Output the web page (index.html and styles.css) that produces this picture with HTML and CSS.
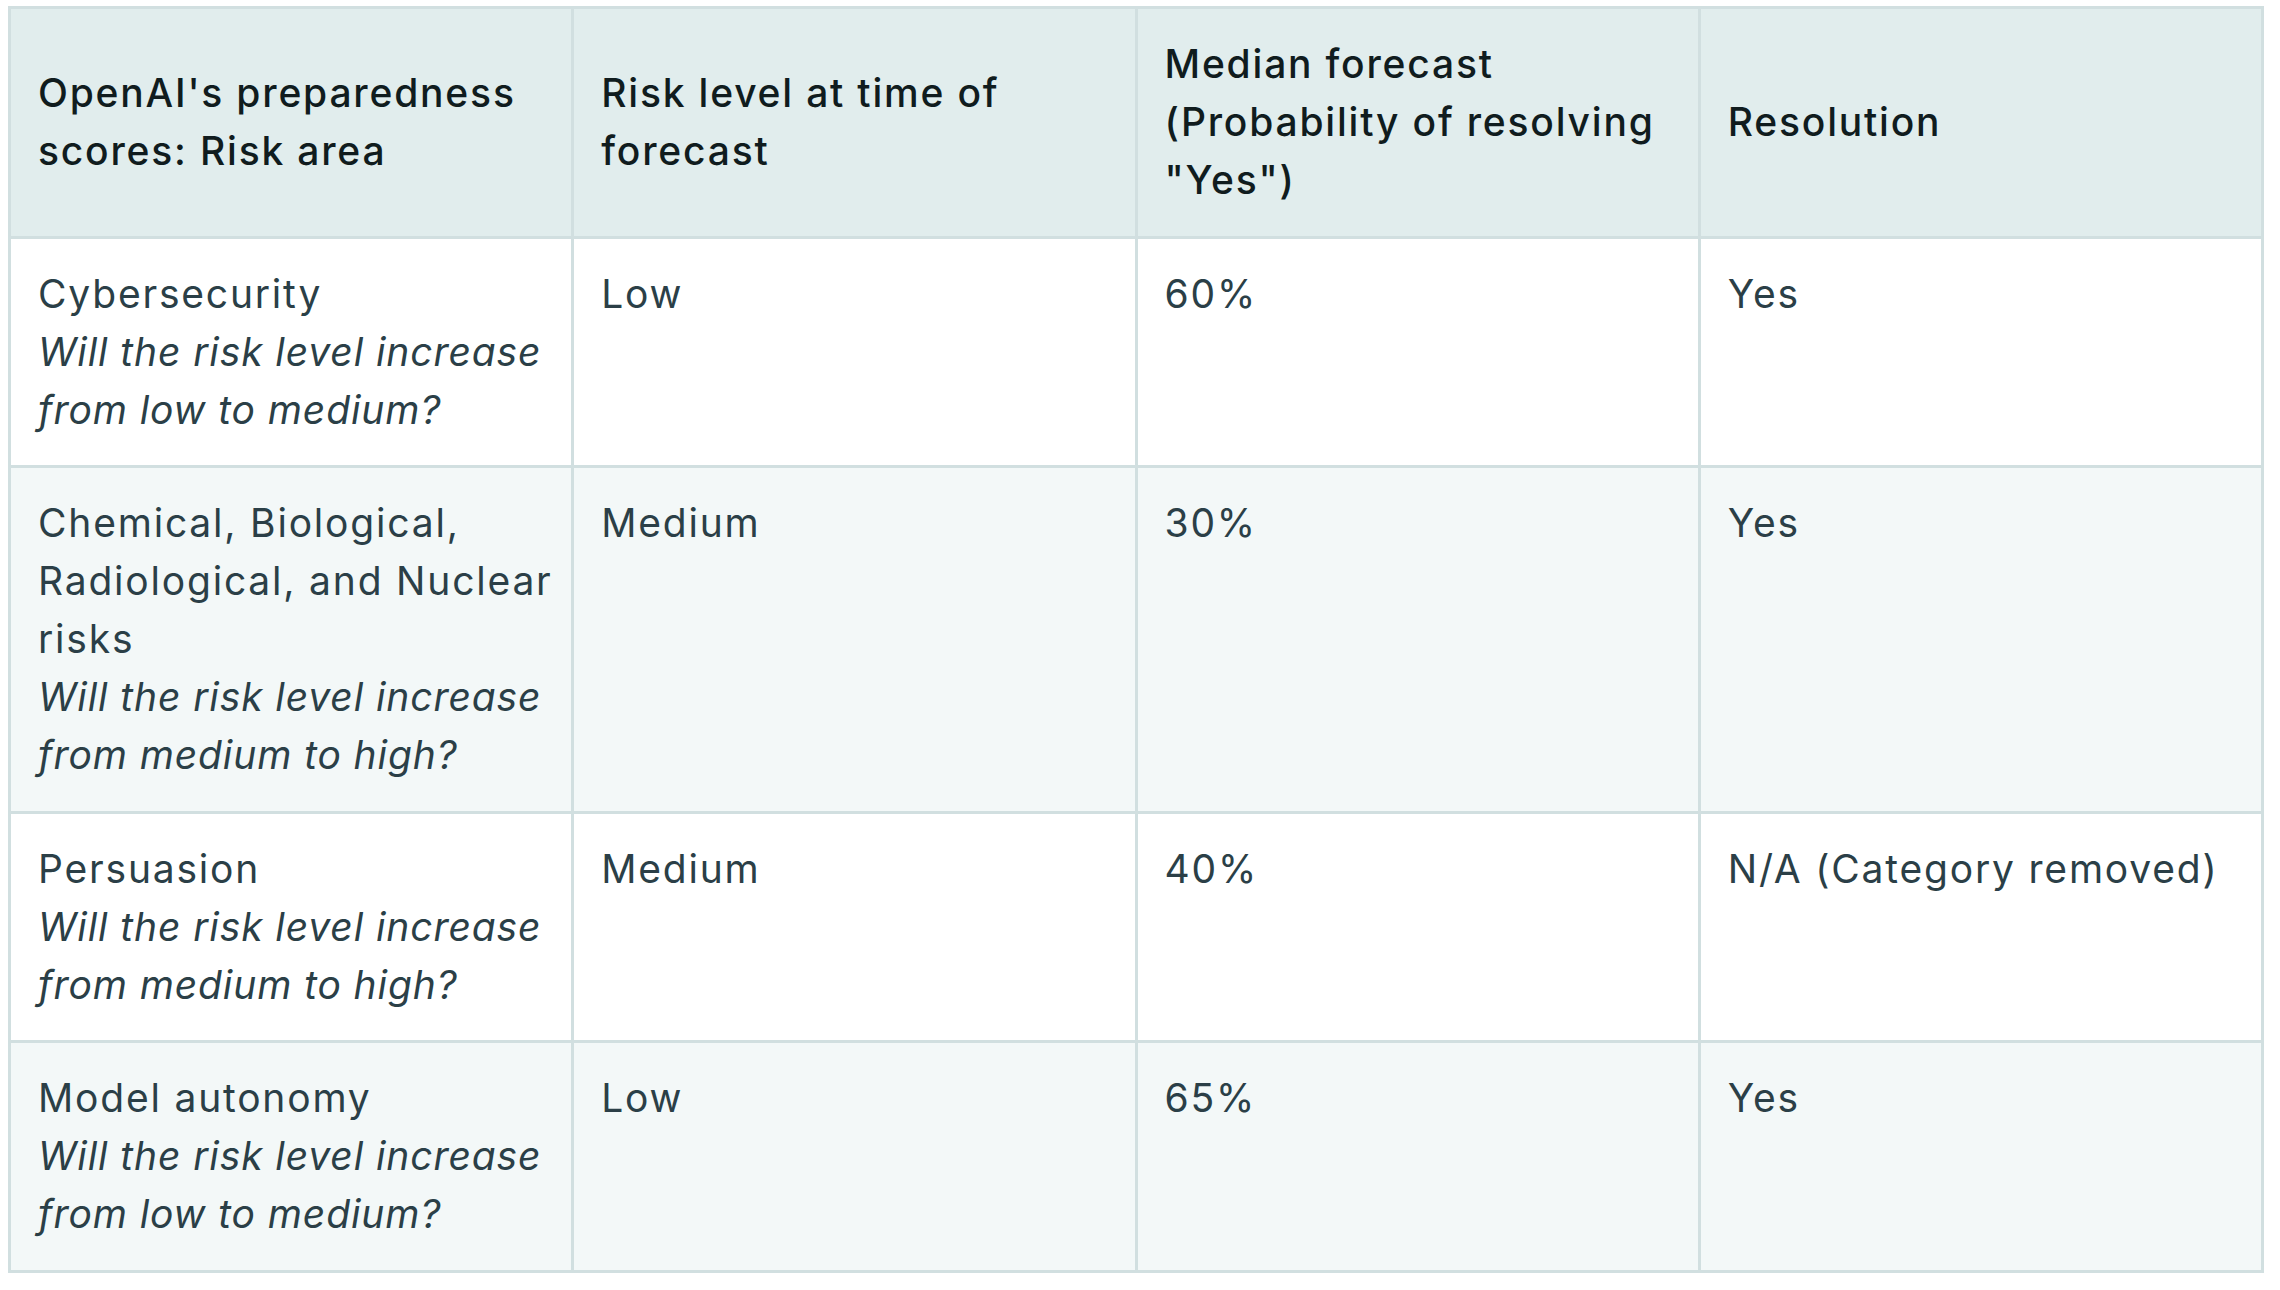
FILE: index.html
```html
<!DOCTYPE html>
<html lang="en">
<head>
<meta charset="utf-8">
<title>Preparedness forecasts</title>
<link rel="stylesheet" href="styles.css">
</head>
<body>
<table class="forecast-table">
  <colgroup>
    <col class="col"><col class="col"><col class="col"><col class="col">
  </colgroup>
  <thead>
    <tr>
      <th>OpenAI's preparedness scores: Risk area</th>
      <th>Risk level at time of forecast</th>
      <th>Median forecast (Probability of resolving "Yes")</th>
      <th>Resolution</th>
    </tr>
  </thead>
  <tbody>
    <tr>
      <td>Cybersecurity<br><em>Will the risk level increase from low to medium?</em></td>
      <td>Low</td>
      <td>60%</td>
      <td>Yes</td>
    </tr>
    <tr class="alt">
      <td>Chemical, Biological, Radiological, and Nuclear risks<br><em>Will the risk level increase from medium to high?</em></td>
      <td>Medium</td>
      <td>30%</td>
      <td>Yes</td>
    </tr>
    <tr>
      <td>Persuasion<br><em>Will the risk level increase from medium to high?</em></td>
      <td>Medium</td>
      <td>40%</td>
      <td>N/A (Category removed)</td>
    </tr>
    <tr class="alt">
      <td>Model autonomy<br><em>Will the risk level increase from low to medium?</em></td>
      <td>Low</td>
      <td>65%</td>
      <td>Yes</td>
    </tr>
  </tbody>
</table>
</body>
</html>
```
FILE: styles.css
```css
html, body {
  margin: 0;
  padding: 0;
  background: #ffffff;
}
body {
  padding: 6px 16px 0 8px;
  font-family: Inter, "Noto Sans", sans-serif;
}
.forecast-table {
  width: 2256px;
  border-collapse: collapse;
  table-layout: fixed;
  border: 3px solid #d1dfe0;
}
.forecast-table th,
.forecast-table td {
  border: 3px solid #d1dfe0;
  padding: 26px 14px 26.5px 27px;
  font-size: 39px;
  line-height: 58px;
  letter-spacing: 1.8px;
  text-align: left;
  vertical-align: top;
}
.forecast-table th {
  background: #e1eded;
  color: #101c1e;
  font-weight: 500;
  vertical-align: middle;
}
.forecast-table td {
  color: #2b3f47;
  font-weight: 400;
  background: #ffffff;
}
.forecast-table tr.alt td {
  background: #f3f8f8;
}
.forecast-table em {
  font-style: italic;
  letter-spacing: 0.9px;
}
```
